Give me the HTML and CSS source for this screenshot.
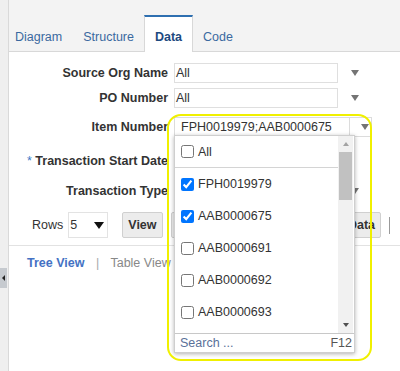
FILE: index.html
```html
<!DOCTYPE html>
<html lang="en">
<head>
    <meta charset="UTF-8">
    <meta name="viewport" content="width=device-width, initial-scale=1.0">
    <title>Data</title>
    <link rel="stylesheet" href="styles.css">
</head>
<body>
    <div class="page">
        <div class="side"><span class="handle"></span></div>

        <div class="main">
            <ul class="tabs">
                <li class="tab">Diagram</li>
                <li class="tab">Structure</li>
                <li class="tab active">Data</li>
                <li class="tab">Code</li>
            </ul>

            <div class="panel">
                <div class="form">
                    <label>Source Org Name</label>
                    <div class="input">All</div>
                    <span class="arrow-cell"><span class="arrow"></span></span>

                    <label>PO Number</label>
                    <div class="input">All</div>
                    <span class="arrow-cell"><span class="arrow"></span></span>

                    <label>Item Number</label>
                    <div class="item-field">
                        <span class="value">FPH0019979;AAB0000675</span>
                        <span class="field-btn"><span class="arrow"></span></span>

                        <div class="popup">
                            <div class="popup-body">
                                <div class="list">
                                    <div class="option all"><input type="checkbox"> All</div>
                                    <div class="option"><input type="checkbox" checked> FPH0019979</div>
                                    <div class="option"><input type="checkbox" checked> AAB0000675</div>
                                    <div class="option"><input type="checkbox"> AAB0000691</div>
                                    <div class="option"><input type="checkbox"> AAB0000692</div>
                                    <div class="option"><input type="checkbox"> AAB0000693</div>
                                </div>
                                <div class="scrollbar">
                                    <span class="sb-btn"><span class="sb-up"></span></span>
                                    <span class="sb-thumb"></span>
                                    <span class="sb-space"></span>
                                    <span class="sb-btn"><span class="sb-down"></span></span>
                                </div>
                            </div>
                            <div class="popup-foot">
                                <span class="search">Search ...</span>
                                <span class="key">F12</span>
                            </div>
                        </div>

                        <div class="highlight"></div>
                    </div>

                    <label><span class="req">*</span> Transaction Start Date</label>
                    <div class="input"></div>
                    <span class="arrow-cell"></span>

                    <label>Transaction Type</label>
                    <div class="input"></div>
                    <span class="arrow-cell"><span class="arrow"></span></span>
                </div>

                <div class="toolbar">
                    <span class="rows-label">Rows</span>
                    <div class="rows-select">5 <span class="arrow dark"></span></div>
                    <button class="btn view">View</button>
                    <button class="btn">Refresh</button>
                    <button class="btn export">Export Data</button>
                    <span class="sep"></span>
                </div>

                <div class="views">
                    <span class="view-link current">Tree View</span>
                    <span class="bar">|</span>
                    <span class="view-link">Table View</span>
                </div>
            </div>
        </div>
    </div>
</body>
</html>
```

FILE: styles.css
```css
html, body {
    margin: 0;
    height: 371px;
    overflow: hidden;
}

body {
    font-family: "Liberation Sans", Arial, sans-serif;
    font-size: 12.5px;
    color: #333;
    background: #f3f3f3;
}

.page {
    display: flex;
    height: 371px;
}

.side {
    width: 8px;
    background: #efefef;
    border-right: 1px solid #d9d9d9;
    display: flex;
    flex-direction: column;
}

.handle {
    margin-top: 268px;
    width: 7px;
    height: 20px;
    background: #c6cacf;
    display: flex;
    align-items: center;
    justify-content: center;
}

.handle::before {
    content: "";
    border-right: 3px solid #222;
    border-top: 3px solid transparent;
    border-bottom: 3px solid transparent;
}

.main {
    flex: 1;
    display: flex;
    flex-direction: column;
}

/* tabs */
.tabs {
    display: flex;
    margin: 0;
    padding: 15px 0 0 0;
    list-style: none;
    background: #f3f3f3;
    border-bottom: 1px solid #d8d8d8;
}

.tab {
    padding: 6px 10.5px 0;
    line-height: 28px;
    border-top: 2px solid transparent;
    color: #3a69a0;
}

.tab:first-child {
    padding-left: 6px;
}

.tab.active {
    background: #fff;
    color: #1d4a80;
    font-weight: bold;
    border-top-color: #2e6fb0;
    border-left: 1px solid #d8d8d8;
    border-right: 1px solid #d8d8d8;
    padding: 6px 9.5px 1px;
    margin-bottom: -1px;
}

.panel {
    flex: 1;
    background: #fff;
    padding-top: 11px;
}

/* form */
.form {
    display: grid;
    grid-template-columns: 165px 164px 34px;
    grid-template-rows: 25px 29px 34px 30px 31px;
    align-items: start;
}

.form label {
    text-align: right;
    padding-right: 6px;
    line-height: 20px;
    font-weight: bold;
    white-space: nowrap;
}

.req {
    color: #3a78c6;
    font-weight: normal;
}

.input {
    height: 20px;
    box-sizing: border-box;
    border: 1px solid #dfdfdf;
    padding: 0 1px;
    line-height: 18px;
}

.arrow-cell {
    height: 20px;
    display: flex;
    align-items: center;
    justify-content: center;
}

.arrow {
    width: 0;
    height: 0;
    border-left: 4.5px solid transparent;
    border-right: 4.5px solid transparent;
    border-top: 6px solid #747474;
}

.arrow.dark {
    border-left-width: 5px;
    border-right-width: 5px;
    border-top: 7px solid #111;
}

.item-field {
    grid-column: 2 / 4;
    position: relative;
    height: 20px;
    box-sizing: border-box;
    border: 1px solid #dcdcdc;
    display: flex;
}

.item-field .value {
    flex: 1;
    padding-left: 6px;
    line-height: 18px;
}

.field-btn {
    width: 22px;
    box-sizing: border-box;
    border-left: 1px solid #dcdcdc;
    padding-left: 11px;
    display: flex;
    align-items: center;
}

/* dropdown */
.popup {
    position: absolute;
    left: -1px;
    top: 17px;
    width: 181px;
    box-sizing: border-box;
    background: #fff;
    border: 1px solid #cfcfcf;
    box-shadow: 0 1px 4px rgba(0, 0, 0, 0.3);
    z-index: 2;
}

.popup-body {
    display: flex;
    height: 197px;
}

.list {
    flex: 1;
    overflow: hidden;
}

.option {
    height: 32px;
    display: flex;
    align-items: center;
    gap: 4px;
    padding-left: 6px;
    white-space: nowrap;
}

.option.all {
    height: 31px;
    border-bottom: 1px solid #d4d4d4;
}

.option input {
    width: 13px;
    height: 13px;
    margin: 0;
}

.scrollbar {
    width: 15px;
    margin-right: 1px;
    background: #f1f1f1;
    display: flex;
    flex-direction: column;
}

.sb-btn {
    height: 16px;
    display: flex;
    align-items: center;
    justify-content: center;
}

.sb-up {
    border-left: 3.5px solid transparent;
    border-right: 3.5px solid transparent;
    border-bottom: 4px solid #a3a3a3;
}

.sb-down {
    border-left: 3.5px solid transparent;
    border-right: 3.5px solid transparent;
    border-top: 4px solid #505050;
}

.sb-thumb {
    height: 48px;
    margin: 0 1px;
    background: #c1c1c1;
}

.sb-space {
    flex: 1;
}

.popup-foot {
    display: flex;
    justify-content: space-between;
    border-top: 1px solid #c8c8c8;
    line-height: 18px;
    padding: 0 2px 0 5px;
}

.search {
    color: #5a7199;
}

.key {
    color: #555;
}

.highlight {
    position: absolute;
    left: -8px;
    top: -4px;
    width: 205px;
    height: 247px;
    box-sizing: border-box;
    border: 2px solid #f0f000;
    border-radius: 14px;
    pointer-events: none;
    z-index: 3;
}

/* toolbar */
.toolbar {
    display: flex;
    align-items: center;
    padding: 0 10px 7px 23px;
    border-bottom: 1px solid #e2e2e2;
}

.rows-label {
    line-height: 26px;
}

.rows-select {
    margin-left: 5px;
    width: 40px;
    height: 26px;
    box-sizing: border-box;
    border: 1px solid #e3e3e3;
    padding: 0 3px 0 1px;
    display: flex;
    align-items: center;
    justify-content: space-between;
}

.btn {
    height: 26px;
    padding: 0 5px;
    margin-left: 8px;
    font-family: inherit;
    font-size: 12.5px;
    font-weight: bold;
    color: #333;
    background: #ececec;
    border: 1px solid #d0d0d0;
    border-radius: 2px;
}

.btn.view {
    margin-left: 14px;
}

.btn.export {
    margin-left: auto;
    margin-right: 8px;
}

.sep {
    width: 1px;
    height: 17px;
    background: #9a9a9a;
}

/* view switch */
.views {
    padding: 9px 0 0 18px;
    line-height: 16px;
}

.view-link {
    color: #888;
}

.view-link.current {
    color: #4472c4;
    font-weight: bold;
}

.bar {
    color: #aaa;
    margin: 0 8px;
}
```
